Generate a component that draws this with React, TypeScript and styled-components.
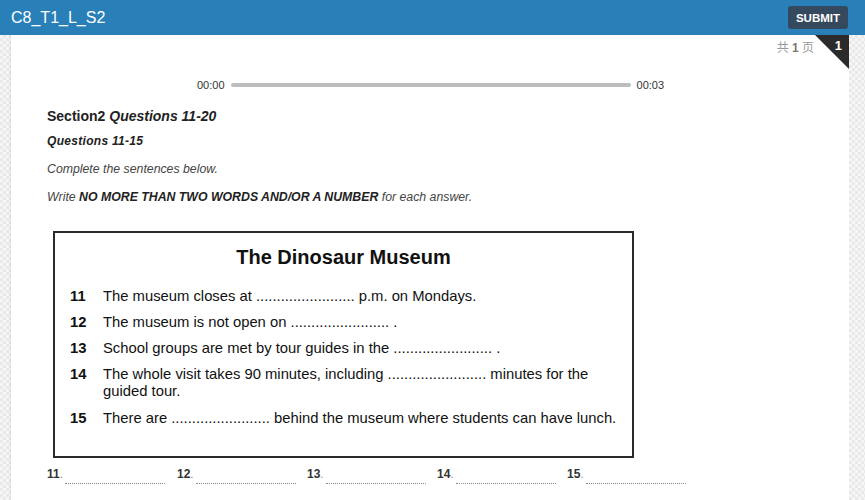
import styled, { createGlobalStyle } from "styled-components";

const Global = createGlobalStyle`
  html, body {
    margin: 0;
    padding: 0;
    font-family: "Liberation Sans", Arial, sans-serif;
  }
`;

const items = [
  { n: "11", text: "The museum closes at ........................ p.m. on Mondays." },
  { n: "12", text: "The museum is not open on ........................ ." },
  { n: "13", text: "School groups are met by tour guides in the ........................ ." },
  {
    n: "14",
    text: "The whole visit takes 90 minutes, including ........................ minutes for the\nguided tour.",
  },
  { n: "15", text: "There are ........................ behind the museum where students can have lunch." },
];

const answers = ["11", "12", "13", "14", "15"];

const App = () => {
  return (
    <Screen>
      <Global />
      <Header>
        <h1>C8_T1_L_S2</h1>
        <SubmitButton>SUBMIT</SubmitButton>
      </Header>
      <Body>
        <Panel>
          <Corner>
            <span>1</span>
          </Corner>
          <PageCount>
            共 <b>1</b> 页
          </PageCount>
          <Player>
            <span>00:00</span>
            <div className="track" />
            <span>00:03</span>
          </Player>
          <SectionTitle>
            Section2 <i>Questions 11-20</i>
          </SectionTitle>
          <SubTitle>Questions 11-15</SubTitle>
          <Instruction>Complete the sentences below.</Instruction>
          <Instruction>
            Write <b>NO MORE THAN TWO WORDS AND/OR A NUMBER</b> for each answer.
          </Instruction>
          <Sheet>
            <h2>The Dinosaur Museum</h2>
            {items.map((it) => (
              <SheetRow key={it.n}>
                <b>{it.n}</b>
                <span>{it.text}</span>
              </SheetRow>
            ))}
          </Sheet>
          <Answers>
            {answers.map((a) => (
              <Answer key={a}>
                <b>{a}</b>
                <span className="dot">.</span>
                <div className="blank" />
              </Answer>
            ))}
          </Answers>
        </Panel>
      </Body>
    </Screen>
  );
};

const Screen = styled.div`
  width: 865px;
  height: 500px;
  overflow: hidden;
  display: flex;
  flex-direction: column;
`;

const Header = styled.header`
  height: 35px;
  flex-shrink: 0;
  background-color: #2980b9;
  display: flex;
  align-items: center;
  justify-content: space-between;
  padding: 0 17px 0 11px;
  h1 {
    margin: 0;
    font-size: 16px;
    font-weight: normal;
    color: #fff;
  }
`;

const SubmitButton = styled.button`
  background-color: #34495e;
  color: #fff;
  border: none;
  border-radius: 3px;
  font-family: "Liberation Sans", Arial, sans-serif;
  font-size: 11.5px;
  font-weight: bold;
  width: 60px;
  height: 23px;
  padding: 0;
`;

const Body = styled.div`
  flex: 1;
  display: flex;
  padding: 0 16px 0 11px;
  background-color: #f1f1f1;
  background-image: repeating-conic-gradient(#e9e9e9 0 25%, #f6f6f6 0 50%);
  background-size: 6px 6px;
`;

const Panel = styled.div`
  position: relative;
  flex: 1;
  background: #fff;
  box-shadow: -1px 0 2px rgba(0, 0, 0, 0.08);
  padding: 0 0 0 36px;
  color: #333;
`;

const Corner = styled.div`
  position: absolute;
  top: 0;
  right: 0;
  width: 0;
  height: 0;
  border-top: 34px solid #2b2b2b;
  border-left: 34px solid transparent;
  span {
    position: absolute;
    top: -31px;
    right: 7px;
    color: #fff;
    font-weight: bold;
    font-size: 13px;
  }
`;

const PageCount = styled.div`
  height: 22px;
  margin-top: 2px;
  padding-right: 35px;
  text-align: right;
  font-size: 12px;
  line-height: 22px;
  color: #999;
  font-family: "Liberation Sans", "Noto Sans CJK SC", sans-serif;
  b {
    color: #777;
  }
`;

const Player = styled.div`
  display: flex;
  align-items: center;
  gap: 6px;
  margin: 17px 0 0 150px;
  height: 18px;
  font-size: 11px;
  color: #333;
  .track {
    width: 400px;
    height: 4px;
    border-radius: 2px;
    background: #bdbdbd;
  }
`;

const SectionTitle = styled.div`
  margin-top: 13px;
  font-size: 14px;
  font-weight: bold;
  line-height: 18px;
  color: #222;
`;

const SubTitle = styled.div`
  margin-top: 7px;
  font-size: 12px;
  font-weight: bold;
  font-style: italic;
  letter-spacing: 0.3px;
  line-height: 18px;
  color: #222;
`;

const Instruction = styled.p`
  margin: 10px 0 0;
  font-size: 12.3px;
  font-style: italic;
  line-height: 18px;
  color: #444;
  b {
    color: #222;
  }
`;

const Sheet = styled.div`
  box-sizing: border-box;
  margin: 25px 0 0 6px;
  width: 581px;
  height: 227px;
  border: 2px solid #2a2a2a;
  padding: 12px 0 0;
  color: #111;
  h2 {
    margin: 0 0 19px;
    text-align: center;
    font-size: 20px;
    line-height: 24px;
  }
`;

const SheetRow = styled.div`
  display: flex;
  padding-left: 15px;
  font-size: 14.8px;
  line-height: 17px;
  margin-bottom: 9px;
  &:nth-of-type(4) {
    margin-bottom: 10px;
  }
  b {
    width: 33px;
    flex-shrink: 0;
  }
  span {
    white-space: pre;
  }
`;

const Answers = styled.div`
  display: flex;
  margin-top: 8px;
`;

const Answer = styled.div`
  display: flex;
  align-items: flex-start;
  width: 130px;
  font-size: 12px;
  line-height: 16px;
  b {
    color: #333;
  }
  .dot {
    color: #999;
    margin-right: 2px;
  }
  .blank {
    width: 100px;
    height: 17px;
    border-bottom: 1px dotted #888;
  }
`;

export default App;
